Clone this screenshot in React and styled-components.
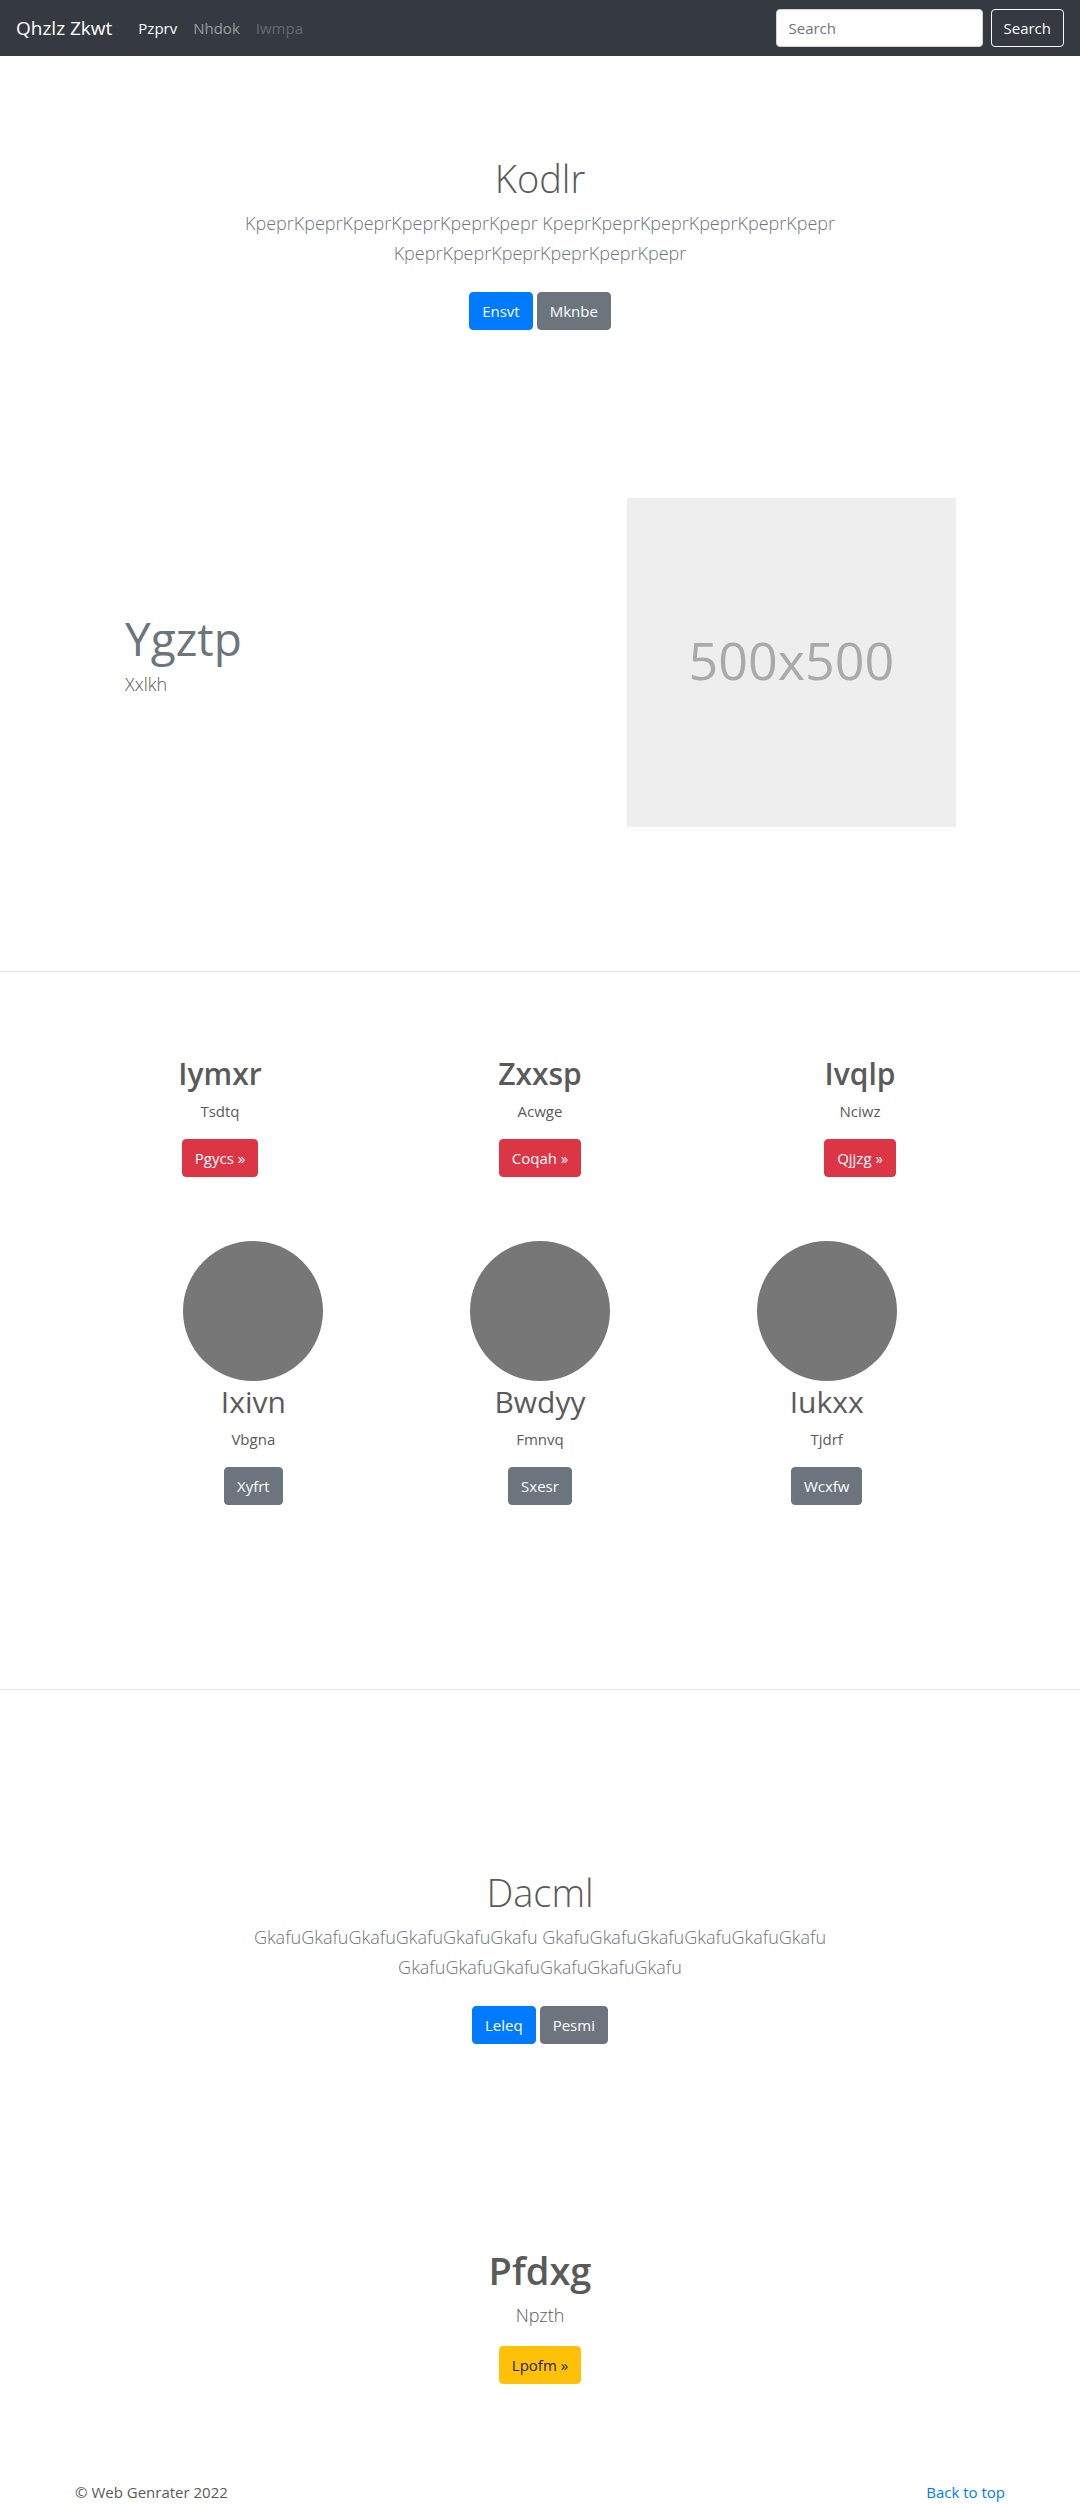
import React from 'react';
import styled, { createGlobalStyle } from 'styled-components';

const GlobalStyle = createGlobalStyle`
  *, *::before, *::after { box-sizing: border-box; }
  body {
    margin: 0;
    background: #fff;
    color: #5a5a5a;
    font-family: "Open Sans", "Noto Sans", sans-serif;
    font-size: 15px;
    line-height: 24px;
  }
  h1, h2, p { margin: 0; }
`;

const tones = {
  primary: { bg: '#007bff', fg: '#fff' },
  secondary: { bg: '#6c757d', fg: '#fff' },
  danger: { bg: '#dc3545', fg: '#fff' },
  warning: { bg: '#ffc107', fg: '#212529' },
};

const Navbar = styled.header`
  display: flex;
  align-items: center;
  height: 56px;
  padding: 0 16px;
  background: #343a40;
`;

const Brand = styled.a`
  margin-right: 18px;
  color: #fff;
  font-size: 19px;
  line-height: 30px;
  text-decoration: none;
`;

const NavLinks = styled.nav`
  display: flex;
  flex: 1;
`;

const NavLink = styled.a`
  padding: 8px;
  color: ${({ $alpha }) => `rgba(255, 255, 255, ${$alpha})`};
  text-decoration: none;
`;

const SearchForm = styled.form`
  display: flex;
  gap: 8px;
`;

const SearchInput = styled.input`
  width: 207px;
  height: 38px;
  padding: 6px 12px;
  border: 1px solid #ced4da;
  border-radius: 4px;
  background: #fff;
  color: #495057;
  font: inherit;
  &::placeholder { color: #6c757d; opacity: 1; }
`;

const SearchButton = styled.button`
  height: 38px;
  padding: 6px 12px;
  border: 1px solid #f8f9fa;
  border-radius: 4px;
  background: transparent;
  color: #f8f9fa;
  font: inherit;
  cursor: pointer;
`;

const ButtonLink = styled.a`
  display: inline-block;
  padding: 6px 12px;
  border: 1px solid ${({ $tone }) => tones[$tone].bg};
  border-radius: 4px;
  background: ${({ $tone }) => tones[$tone].bg};
  color: ${({ $tone }) => tones[$tone].fg};
  text-decoration: none;
`;

const Buttons = styled.div`
  display: flex;
  justify-content: center;
  gap: 4px;
  margin-top: 24px;
`;

const Hero = styled.section`
  max-width: 720px;
  margin: 0 auto;
  padding: 96px 16px 120px;
  text-align: center;
`;

const Title = styled.h1`
  margin-bottom: 4px;
  font-size: 38px;
  font-weight: ${({ $weight }) => $weight};
  line-height: 52px;
`;

const Lead = styled.p`
  margin-bottom: 16px;
  color: ${({ $muted }) => ($muted ? '#6c757d' : 'inherit')};
  font-size: 18px;
  font-weight: 300;
  line-height: 30px;
`;

const Container = styled.div`
  max-width: 960px;
  margin: 0 auto;
`;

const Inset = styled.div`
  padding: 0 50px;
`;

const Featurette = styled.section`
  display: grid;
  grid-template-columns: 7fr 5fr;
  align-items: center;
  padding: 48px 0 144px;
  & > * { margin: 0 14px 0 15px; }
`;

const FeaturetteTitle = styled.h2`
  margin-bottom: 4px;
  color: #6c757d;
  font-size: 46px;
  font-weight: 400;
  line-height: 54px;
`;

const Placeholder = styled.div`
  display: grid;
  place-items: center;
  aspect-ratio: 1;
  padding-bottom: 6px;
  background: #eee;
  color: #aaa;
  font-size: 52px;
  line-height: 60px;
`;

const Divider = styled.hr`
  margin: 0;
  border: 0;
  border-top: 1px solid rgba(0, 0, 0, 0.1);
`;

const Columns = styled.div`
  display: grid;
  grid-template-columns: repeat(3, 1fr);
  padding-top: ${({ $top }) => $top}px;
  padding-bottom: ${({ $bottom }) => $bottom}px;
`;

const Column = styled.article`
  display: flex;
  flex-direction: column;
  align-items: center;
`;

const Circle = styled.div`
  width: 140px;
  height: 140px;
  border-radius: 50%;
  background: #777;
`;

const ColumnTitle = styled.h2`
  margin-bottom: 4px;
  font-size: 30px;
  font-weight: ${({ $weight }) => $weight};
  line-height: 42px;
`;

const ColumnText = styled.p`
  margin-bottom: 16px;
`;

const Closing = styled.section`
  display: flex;
  flex-direction: column;
  align-items: center;
  padding: 80px 0 96px;
`;

const Footer = styled.footer`
  display: flex;
  justify-content: space-between;
  padding: 0 15px;
`;

const FooterLink = styled.a`
  color: #007bff;
  text-decoration: none;
`;

const Spaced = styled.div`
  padding-top: 80px;
`;

const offers = [
  { title: 'Iymxr', text: 'Tsdtq', action: 'Pgycs »' },
  { title: 'Zxxsp', text: 'Acwge', action: 'Coqah »' },
  { title: 'Ivqlp', text: 'Nciwz', action: 'Qjjzg »' },
];

const people = [
  { title: 'Ixivn', text: 'Vbgna', action: 'Xyfrt' },
  { title: 'Bwdyy', text: 'Fmnvq', action: 'Sxesr' },
  { title: 'Iukxx', text: 'Tjdrf', action: 'Wcxfw' },
];

function HeroBlock({ title, text, primary, secondary }) {
  return (
    <Hero>
      <Title $weight={300}>{title}</Title>
      <Lead $muted>{text}</Lead>
      <Buttons>
        <ButtonLink href="#" $tone="primary">{primary}</ButtonLink>
        <ButtonLink href="#" $tone="secondary">{secondary}</ButtonLink>
      </Buttons>
    </Hero>
  );
}

function ColumnItem({ item, weight, tone, circle }) {
  return (
    <Column>
      {circle && <Circle />}
      <ColumnTitle $weight={weight}>{item.title}</ColumnTitle>
      <ColumnText>{item.text}</ColumnText>
      <ButtonLink href="#" $tone={tone}>{item.action}</ButtonLink>
    </Column>
  );
}

export default function App() {
  return (
    <>
      <GlobalStyle />
      <Navbar id="top">
        <Brand href="#">Qhzlz Zkwt</Brand>
        <NavLinks>
          <NavLink href="#" $alpha={1}>Pzprv</NavLink>
          <NavLink href="#" $alpha={0.5}>Nhdok</NavLink>
          <NavLink href="#" $alpha={0.25} aria-disabled="true">Iwmpa</NavLink>
        </NavLinks>
        <SearchForm role="search">
          <SearchInput type="text" placeholder="Search" aria-label="Search" />
          <SearchButton type="button">Search</SearchButton>
        </SearchForm>
      </Navbar>
      <main>
        <HeroBlock
          title="Kodlr"
          text={['Kpepr', 'Kpepr', 'Kpepr'].map((word) => word.repeat(6)).join(' ')}
          primary="Ensvt"
          secondary="Mknbe"
        />
        <Container>
          <Inset>
            <Featurette>
              <div>
                <FeaturetteTitle>Ygztp</FeaturetteTitle>
                <Lead>Xxlkh</Lead>
              </div>
              <Placeholder>500x500</Placeholder>
            </Featurette>
          </Inset>
        </Container>
        <Divider />
        <Container>
          <Columns $top={81} $bottom={64}>
            {offers.map((item) => (
              <ColumnItem key={item.title} item={item} weight={600} tone="danger" />
            ))}
          </Columns>
          <Inset>
            <Columns $top={0} $bottom={184}>
              {people.map((item) => (
                <ColumnItem key={item.title} item={item} weight={400} tone="secondary" circle />
              ))}
            </Columns>
          </Inset>
        </Container>
        <Divider />
        <Spaced>
          <HeroBlock
            title="Dacml"
            text={['Gkafu', 'Gkafu', 'Gkafu'].map((word) => word.repeat(6)).join(' ')}
            primary="Leleq"
            secondary="Pesmi"
          />
        </Spaced>
        <Closing>
          <Title $weight={600}>Pfdxg</Title>
          <Lead>Npzth</Lead>
          <ButtonLink href="#" $tone="warning">Lpofm »</ButtonLink>
        </Closing>
      </main>
      <Container>
        <Footer>
          <span>© Web Genrater 2022</span>
          <FooterLink href="#top">Back to top</FooterLink>
        </Footer>
      </Container>
    </>
  );
}
